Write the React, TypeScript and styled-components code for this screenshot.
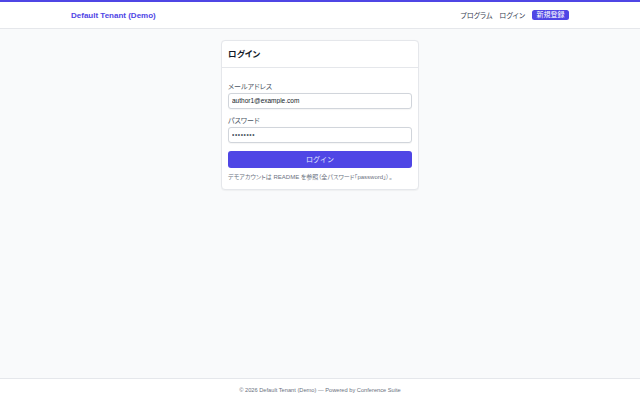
import styled, { createGlobalStyle } from "styled-components"

const GlobalStyle = createGlobalStyle`
  html, body {
    margin: 0;
    padding: 0;
    background: #f9fafb;
    font-family: "Liberation Sans", "Noto Sans CJK JP", sans-serif;
    font-feature-settings: "palt";
    color: #111827;
  }
  * {
    box-sizing: border-box;
  }
`

function Header() {
  return (
    <HeaderBar>
      <Container>
        <Brand>Default Tenant (Demo)</Brand>
        <Nav>
          <NavLink>プログラム</NavLink>
          <NavLink>ログイン</NavLink>
          <SignupButton>新規登録</SignupButton>
        </Nav>
      </Container>
    </HeaderBar>
  )
}

function LoginCard() {
  return (
    <Card>
      <CardHeader>ログイン</CardHeader>
      <Form onSubmit={(e) => e.preventDefault()}>
        <Field>
          <Label>メールアドレス</Label>
          <Input type="email" defaultValue="author1@example.com" />
        </Field>
        <Field $gap>
          <Label>パスワード</Label>
          <Input type="password" defaultValue="password" $secret />
        </Field>
        <SubmitButton type="submit">ログイン</SubmitButton>
        <Hint>デモアカウントは README を参照（全パスワード「password」）。</Hint>
      </Form>
    </Card>
  )
}

export default function App() {
  return (
    <>
      <GlobalStyle />
      <Page>
        <Header />
        <Main>
          <LoginCard />
        </Main>
        <Footer>© 2026 Default Tenant (Demo) — Powered by Conference Suite</Footer>
      </Page>
    </>
  )
}

const Page = styled.div`
  min-height: 100vh;
  display: flex;
  flex-direction: column;
`

const HeaderBar = styled.header`
  background: #ffffff;
  border-top: 2px solid #4f46e5;
  border-bottom: 1px solid #e5e7eb;
`

const Container = styled.div`
  max-width: 512px;
  margin: 0 auto;
  padding: 0 7px;
  height: 26px;
  display: flex;
  align-items: center;
  justify-content: space-between;
`

const Brand = styled.div`
  font-size: 8px;
  font-weight: 700;
  color: #4f46e5;
`

const Nav = styled.nav`
  display: flex;
  align-items: center;
  gap: 7px;
`

const NavLink = styled.span`
  font-size: 7px;
  color: #374151;
`

const SignupButton = styled.span`
  font-size: 7px;
  color: #ffffff;
  background: #4f46e5;
  border-radius: 2.5px;
  padding: 0 4.5px;
  height: 10.5px;
  line-height: 10.5px;
`

const Main = styled.main`
  flex: 1;
  padding-top: 11px;
  display: flex;
  justify-content: center;
  align-items: flex-start;
`

const Card = styled.div`
  width: 198px;
  background: #ffffff;
  border: 1px solid #e5e7eb;
  border-radius: 4px;
  box-shadow: 0 0.5px 1px rgba(0, 0, 0, 0.04);
`

const CardHeader = styled.div`
  padding: 8px 6px;
  font-size: 8.5px;
  line-height: 10px;
  font-weight: 700;
  color: #111827;
  border-bottom: 1px solid #e5e7eb;
`

const Form = styled.form`
  padding: 14px 6px 7px;
  display: flex;
  flex-direction: column;
`

const Field = styled.div<{ $gap?: boolean }>`
  display: flex;
  flex-direction: column;
  margin-top: ${(p) => (p.$gap ? "7px" : "0")};
`

const Label = styled.label`
  font-size: 7px;
  line-height: 9px;
  color: #4b5563;
  margin-bottom: 1.5px;
`

const Input = styled.input<{ $secret?: boolean }>`
  height: 16.5px;
  border: 1px solid #d1d5db;
  border-radius: 3px;
  padding: 0 3px;
  font-family: inherit;
  font-size: 6.5px;
  letter-spacing: ${(p) => (p.$secret ? "0.6px" : "0")};
  color: ${(p) => (p.$secret ? "#4b5563" : "#111827")};
  background: #ffffff;
  outline: none;
  box-shadow: 0 0.5px 1px rgba(0, 0, 0, 0.04);
`

const SubmitButton = styled.button`
  margin-top: 7.5px;
  height: 17px;
  border: none;
  border-radius: 3px;
  background: #4f46e5;
  color: #e0e7ff;
  font-family: inherit;
  font-size: 7px;
  cursor: pointer;
`

const Hint = styled.p`
  margin: 5px 0 0;
  font-size: 6px;
  line-height: 9px;
  color: #6b7280;
`

const Footer = styled.footer`
  background: #ffffff;
  border-top: 1px solid #e5e7eb;
  padding: 6.5px 0;
  font-size: 5.7px;
  line-height: 8px;
  color: #6b7280;
  text-align: center;
`
